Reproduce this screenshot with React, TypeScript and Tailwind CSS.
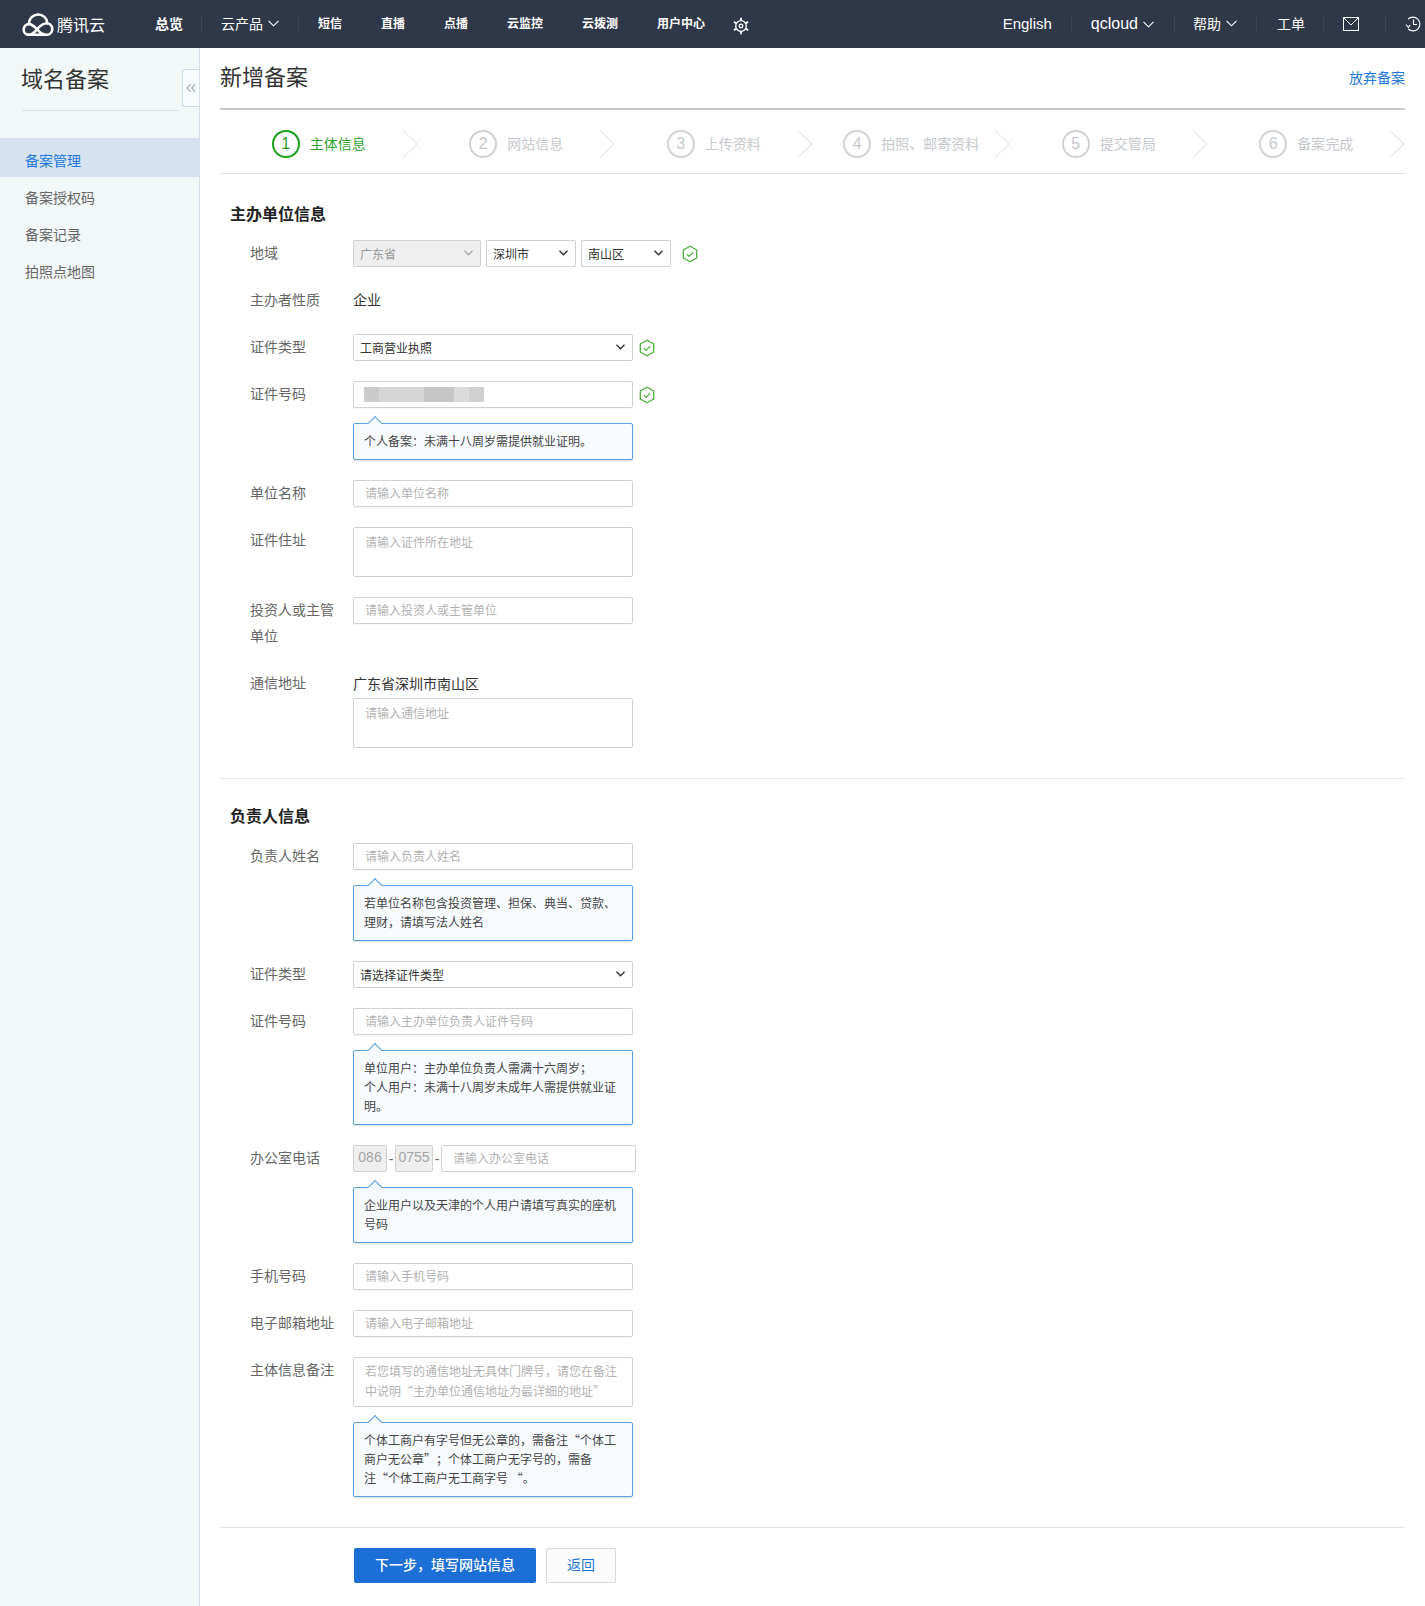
import { ChevronsLeft } from "lucide-react";
import type { ReactNode } from "react";

function Logo() {
  return (
    <svg width="32" height="23" viewBox="0 -1.2 32 23" fill="none" stroke="#fff" strokeWidth="2.6" strokeLinejoin="round" strokeLinecap="round">
      <path d="M7 9.9A9.2 9.2 0 0 1 25.4 9.1 5.8 5.8 0 0 1 25 20.6H7A5.35 5.35 0 0 1 7 9.9c3.4 0 5.6 2.6 8.6 5.9 3.2 3.4 5.6 4.8 9.4 4.8" />
      <path d="M7 20.6c3.6 0 5.8-2.8 8.2-5.6 2.9-3.4 5.6-5.9 10.2-5.9" />
    </svg>
  );
}

function Gear() {
  return (
    <svg width="18" height="18" viewBox="0 0 18 18" fill="none" stroke="#fff" strokeWidth="1.3">
      <circle cx="9" cy="9" r="5.3" />
      <circle cx="9" cy="9" r="1.8" />
      <path d="M9 .8v2.6M9 14.6v2.6M1.9 4.9l2.3 1.3M13.8 11.8l2.3 1.3M1.9 13.1l2.3-1.3M13.8 6.2l2.3-1.3" strokeWidth="1.8" />
    </svg>
  );
}

function Down() {
  return (
    <svg width="11" height="7" viewBox="0 0 11 7" fill="none" stroke="#fff" strokeWidth="1.1" className="shrink-0">
      <path d="M.5.8l5 5 5-5" />
    </svg>
  );
}

function Check() {
  return (
    <svg width="16" height="18" viewBox="0 0 16 18" fill="none" className="shrink-0">
      <path d="M8 1.2l6.7 3.8v8L8 16.8 1.3 13V5z" stroke="#4caf3c" strokeWidth="1.3" strokeLinejoin="round" />
      <path d="M4.8 9.2l2.3 2.3 4-4.4" stroke="#4caf3c" strokeWidth="1.2" />
    </svg>
  );
}

function StepArrow() {
  return (
    <svg width="16" height="28" viewBox="0 0 16 28" fill="none" className="absolute right-0 top-0">
      <path d="M1 0.5L15 14 1 27.5" stroke="#d9dcdf" strokeWidth="1" />
    </svg>
  );
}

const inputCls =
  "block w-[280px] h-[27px] border border-[#d0d0d0] rounded-[2px] px-[11px] pb-[2px] text-xs text-[#333] outline-none placeholder:text-[#b2b2b2] shadow-[0_1px_1px_rgba(0,0,0,0.04)]";
const areaCls =
  "block w-[280px] border border-[#d0d0d0] rounded-[2px] px-[11px] text-xs leading-[20px] text-[#333] outline-none resize-none placeholder:text-[#b2b2b2]";

function Sel({ text, w, disabled }: { text: string; w: string; disabled?: boolean }) {
  return (
    <div className={`relative shrink-0 ${w}`}>
      <select
        disabled={disabled}
        className={
          disabled
            ? "block w-full h-[27px] appearance-none border border-[#d0d0d0] rounded-[2px] bg-[#efefef] pl-[6px] text-xs text-[#999] outline-none"
            : "block w-full h-[27px] appearance-none border border-[#d0d0d0] rounded-[2px] bg-white pl-[6px] text-xs text-[#333] outline-none"
        }
      >
        <option>{text}</option>
      </select>
      <svg width="9" height="6" viewBox="0 0 9 6" fill="none" strokeWidth="1.4" stroke={disabled ? "#a8a8a8" : "#333"} className="absolute right-[8px] top-[10px] pointer-events-none">
        <path d="M.5.8l4 4 4-4" />
      </svg>
    </div>
  );
}

function Row({ label, mb, children }: { label: ReactNode; mb: string; children: ReactNode }) {
  return (
    <div className={`flex pl-[30px] ${mb}`}>
      <label className="w-[103px] shrink-0 text-sm leading-[24px] text-[#666]">{label}</label>
      <div className="min-w-0">{children}</div>
    </div>
  );
}

function Tip({ children }: { children: ReactNode }) {
  return (
    <div className="relative w-[280px] mt-[15px] border border-[#5a9fdf] rounded-[2px] bg-[#f7fbff] pl-[10px] pr-[10px] pt-[7px] pb-[9px] text-xs leading-[19px] text-[#444] shadow-[0_1px_2px_rgba(0,0,0,0.15)]">
      <span className="absolute -top-[6px] left-[16px] w-[10px] h-[10px] rotate-45 border-l border-t border-[#5a9fdf] bg-[#f7fbff]" />
      <span className="relative">{children}</span>
    </div>
  );
}

const navTop = ["短信", "直播", "点播", "云监控", "云拨测", "用户中心"];

const steps = ["主体信息", "网站信息", "上传资料", "拍照、邮寄资料", "提交管局", "备案完成"];

const menu = ["备案管理", "备案授权码", "备案记录", "拍照点地图"];

const latin = "font-['Liberation_Sans',sans-serif]";

export default function App() {
  return (
    <div lang="zh-CN" className="w-[1425px] h-[1606px] overflow-hidden bg-white font-['Noto_Sans_CJK_SC',sans-serif] [text-spacing-trim:space-all]">
      <header className="h-12 bg-[#2f3849] flex items-center justify-between text-white">
        <div className="flex items-center">
          <div className="flex items-center w-[135px] pl-[22px] gap-[3px]">
            <Logo />
            <span className="text-base">腾讯云</span>
          </div>
          <a className="pl-5 pr-[18px] text-sm font-bold border-r border-[#3c4658] leading-[16px] pb-[2px]">总览</a>
          <a className="pl-[19px] pr-[19px] text-sm flex items-center gap-[5px] border-r border-[#3c4658] leading-[16px] pb-[2px]">
            云产品 <Down />
          </a>
          <nav className="flex items-center gap-[39px] pl-[19px] text-xs font-bold pb-[2px]">
            {navTop.map((n) => (
              <a key={n}>{n}</a>
            ))}
          </nav>
          <span className="ml-[27px] mt-[3px]">
            <Gear />
          </span>
        </div>
        <div className="flex items-center text-sm">
          <a className={`pl-5 pr-[19px] text-[15px] leading-[18px] border-r border-[#3c4658] ${latin}`}>English</a>
          <a className={`pl-[19px] pr-5 text-base leading-[18px] flex items-center gap-[5px] border-r border-[#3c4658] ${latin}`}>
            qcloud <Down />
          </a>
          <a className="pl-[18px] pr-[19px] leading-[16px] pb-[2px] flex items-center gap-[5px] border-r border-[#3c4658]">
            帮助 <Down />
          </a>
          <a className="pl-5 pr-[18px] leading-[16px] pb-[2px] border-r border-[#3c4658]">工单</a>
          <a className="pl-[19px] pr-[26px] h-[18px] flex items-center border-r border-[#3c4658]">
            <svg width="16" height="14" viewBox="0 0 16 14" fill="none" stroke="#fff" strokeWidth="1">
              <rect x="0.5" y="0.5" width="15" height="13" />
              <path d="M0.5 0.5L8 8l7.5-7.5" />
            </svg>
          </a>
          <a className="pl-[19px] pr-1 h-[18px] flex items-center">
            <svg width="16" height="16" viewBox="0 0 16 16" fill="none" stroke="#fff" strokeWidth="1.1">
              <path d="M3 3.2A6.9 6.9 0 1 1 3.2 13" />
              <path d="M8.5 3.5v5H12" />
              <path d="M1 8.5l2.5 3 1.5-2.5" />
            </svg>
          </a>
        </div>
      </header>

      <div className="flex h-[1558px]">
        <aside className="w-[200px] shrink-0 bg-[#f2f7f8] border-r border-[#d3e0ea] relative">
          <h1 className="pl-[21px] pt-[13px] text-[22px] leading-[32px] text-[#333]">域名备案</h1>
          <div className="ml-[22px] w-[156px] mt-[17px] border-b border-[#d8e2e8]" />
          <ul className="mt-[27px] text-sm">
            {menu.map((m, i) => (
              <li
                key={m}
                className={i === 0 ? "h-[39px] leading-[45px] pl-[25px] bg-[#d6e2f0] text-[#2277da]" : "h-[37px] leading-[41px] pl-[25px] text-[#666]"}
              >
                {m}
              </li>
            ))}
          </ul>
          <button className="absolute right-0 top-[21px] w-[17px] h-[38px] flex items-center justify-center border border-r-0 border-[#c8dcec] rounded-l-[3px] bg-[#f8fbfc] text-[#a4b1bc]">
            <ChevronsLeft size={16} strokeWidth={1.8} />
          </button>
        </aside>

        <main className="flex-1 min-w-0 pl-5 pr-5">
          <div className="h-[62px] pb-[6px] flex items-center justify-between border-b-2 border-[#c9c9c9]">
            <h2 className="text-[22px] leading-[32px] text-[#333]">新增备案</h2>
            <a className="mt-[4px] text-sm text-[#2277da]">放弃备案</a>
          </div>

          <div className="grid grid-cols-6 h-[64px] pt-[20px] border-b border-[#e3e3e3]">
            {steps.map((s, i) => (
              <div key={s} className="relative flex justify-center h-[28px]">
                <div className="flex items-center gap-[10px]">
                  <span
                    className={
                      i === 0
                        ? `w-[28px] h-[28px] rounded-full border-2 border-[#1aa31a] flex items-center justify-center text-base text-[#1aa31a] ${latin}`
                        : `w-[28px] h-[28px] rounded-full border-2 border-[#cfd3d7] flex items-center justify-center text-base text-[#c5c9cd] ${latin}`
                    }
                  >
                    {i + 1}
                  </span>
                  <span className={i === 0 ? "pb-[2px] text-sm text-[#2da32d]" : "pb-[2px] text-sm text-[#c5c9cd]"}>{s}</span>
                </div>
                <StepArrow />
              </div>
            ))}
          </div>

          <h3 className="mt-[27px] pl-[10px] text-base font-bold leading-[24px] text-[#222]">主办单位信息</h3>
          <div className="mt-[15px]">
            <Row label="地域" mb="mb-[20px]">
              <div className="flex items-center">
                <Sel text="广东省" w="w-[128px]" disabled />
                <div className="ml-[5px]">
                  <Sel text="深圳市" w="w-[90px]" />
                </div>
                <div className="ml-[5px]">
                  <Sel text="南山区" w="w-[90px]" />
                </div>
                <span className="ml-[11px]">
                  <Check />
                </span>
              </div>
            </Row>
            <Row label="主办者性质" mb="mb-[20px]">
              <p className="text-sm leading-[25px] pb-[2px] text-[#333]">企业</p>
            </Row>
            <Row label="证件类型" mb="mb-[20px]">
              <div className="flex items-center gap-[6px]">
                <Sel text="工商营业执照" w="w-[280px]" />
                <Check />
              </div>
            </Row>
            <Row label="证件号码" mb="mb-[20px]">
              <div className="flex items-center gap-[6px]">
                <div className={`${inputCls} flex items-center !px-[10px] !pb-0`}>
                  <div className="flex h-[15px]">
                    <div className="w-[15px] bg-[#cacaca]" />
                    <div className="w-[45px] bg-[#d5d6d5]" />
                    <div className="w-[30px] bg-[#c5c6c5]" />
                    <div className="w-[15px] bg-[#dadbda]" />
                    <div className="w-[15px] bg-[#cfd0cf]" />
                  </div>
                </div>
                <Check />
              </div>
              <Tip>个人备案&#xFF1A;未满十八周岁需提供就业证明。</Tip>
            </Row>
            <Row label="单位名称" mb="mb-[20px]">
              <input placeholder="请输入单位名称" className={inputCls} />
            </Row>
            <Row label="证件住址" mb="mb-[20px]">
              <textarea placeholder="请输入证件所在地址" className={`${areaCls} h-[50px] py-[4px]`} />
            </Row>
            <Row
              label={
                <span className="block leading-[26px] -mt-px">
                  投资人或主管
                  <br />
                  单位
                </span>
              }
              mb="mb-[19px]"
            >
              <input placeholder="请输入投资人或主管单位" className={inputCls} />
              <div className="h-[27px]" />
            </Row>
            <Row label="通信地址" mb="mb-[30px]">
              <p className="text-sm leading-[27px] text-[#333] mb-[1px]">广东省深圳市南山区</p>
              <textarea placeholder="请输入通信地址" className={`${areaCls} h-[50px] py-[4px]`} />
            </Row>
          </div>

          <div className="border-t border-[#e5e5e5]" />

          <h3 className="mt-[24px] pl-[10px] text-base font-bold leading-[24px] text-[#222]">负责人信息</h3>
          <div className="mt-[16px]">
            <Row label="负责人姓名" mb="mb-[20px]">
              <input placeholder="请输入负责人姓名" className={inputCls} />
              <Tip>
                若单位名称包含投资管理、担保、典当、贷款、
                <br />
                理财&#xFF0C;请填写法人姓名
              </Tip>
            </Row>
            <Row label="证件类型" mb="mb-[20px]">
              <Sel text="请选择证件类型" w="w-[280px]" />
            </Row>
            <Row label="证件号码" mb="mb-[20px]">
              <input placeholder="请输入主办单位负责人证件号码" className={inputCls} />
              <Tip>
                单位用户&#xFF1A;主办单位负责人需满十六周岁&#xFF1B;
                <br />
                个人用户&#xFF1A;未满十八周岁未成年人需提供就业证
                <br />
                明。
              </Tip>
            </Row>
            <Row label="办公室电话" mb="mb-[20px]">
              <div className={`flex items-center text-sm text-[#666] ${latin}`}>
                <span className="w-[34px] h-[27px] pb-[3px] flex items-center justify-center border border-[#d0d0d0] rounded-[2px] bg-[#efefef] text-[#a5a5a5]">086</span>
                <span className="w-[8px] text-center">-</span>
                <span className="w-[38px] h-[27px] pb-[3px] flex items-center justify-center border border-[#d0d0d0] rounded-[2px] bg-[#efefef] text-[#a5a5a5]">0755</span>
                <span className="w-[8px] text-center">-</span>
                <input placeholder="请输入办公室电话" className={`${inputCls} !w-[195px] font-['Noto_Sans_CJK_SC',sans-serif]`} />
              </div>
              <Tip>
                企业用户以及天津的个人用户请填写真实的座机
                <br />
                号码
              </Tip>
            </Row>
            <Row label="手机号码" mb="mb-[20px]">
              <input placeholder="请输入手机号码" className={inputCls} />
            </Row>
            <Row label="电子邮箱地址" mb="mb-[20px]">
              <input placeholder="请输入电子邮箱地址" className={inputCls} />
            </Row>
            <Row label="主体信息备注" mb="mb-[30px]">
              <textarea
                placeholder="若您填写的通信地址无具体门牌号&#xFF0C;请您在备注中说明“主办单位通信地址为最详细的地址”"
                className={`${areaCls} h-[50px] py-[3px]`}
              />
              <Tip>
                个体工商户有字号但无公章的&#xFF0C;需备注“个体工
                <br />
                商户无公章”&#xFF1B;个体工商户无字号的&#xFF0C;需备
                <br />
                注“个体工商户无工商字号 “。
              </Tip>
            </Row>
          </div>

          <div className="border-t border-[#e5e5e5]" />

          <div className="flex gap-[10px] mt-5 ml-[134px]">
            <button className="w-[182px] h-[35px] pb-[3px] rounded-[2px] bg-[#1c6fd6] text-sm font-medium text-white">下一步&#xFF0C;填写网站信息</button>
            <button className="w-[70px] h-[35px] pb-[3px] rounded-[2px] border border-[#d8d8d8] bg-[#fbfbfb] text-sm text-[#2277da]">返回</button>
          </div>
        </main>
      </div>
    </div>
  );
}
